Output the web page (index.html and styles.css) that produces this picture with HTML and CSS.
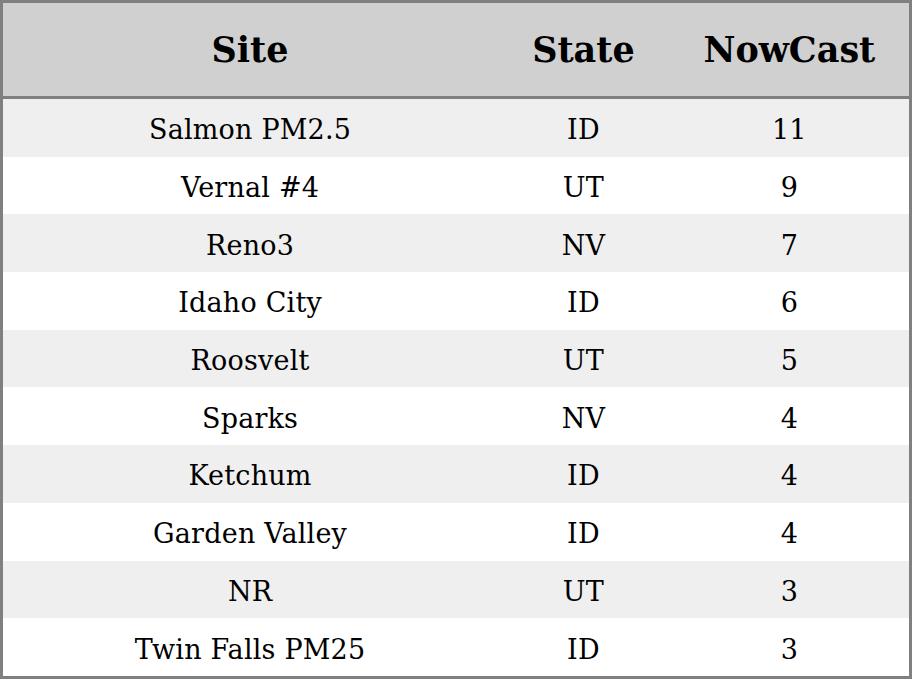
FILE: index.html
```html
<!DOCTYPE html>
<html>
<head>
<meta charset="utf-8">
<link rel="stylesheet" href="styles.css">
</head>
<body>
<table class="aq">
  <colgroup>
    <col class="c-site">
    <col class="c-state">
    <col class="c-now">
  </colgroup>
  <thead>
    <tr><th>Site</th><th>State</th><th>NowCast</th></tr>
  </thead>
  <tbody>
    <tr><td>Salmon PM2.5</td><td>ID</td><td>11</td></tr>
    <tr><td>Vernal #4</td><td>UT</td><td>9</td></tr>
    <tr><td>Reno3</td><td>NV</td><td>7</td></tr>
    <tr><td>Idaho City</td><td>ID</td><td>6</td></tr>
    <tr><td>Roosvelt</td><td>UT</td><td>5</td></tr>
    <tr><td>Sparks</td><td>NV</td><td>4</td></tr>
    <tr><td>Ketchum</td><td>ID</td><td>4</td></tr>
    <tr><td>Garden Valley</td><td>ID</td><td>4</td></tr>
    <tr><td>NR</td><td>UT</td><td>3</td></tr>
    <tr><td>Twin Falls PM25</td><td>ID</td><td>3</td></tr>
  </tbody>
</table>
</body>
</html>
```
FILE: styles.css
```css
html, body {
  margin: 0;
  padding: 0;
  background: #ffffff;
}
.aq {
  width: 912px;
  height: 679px;
  border-collapse: collapse;
  border: 3px solid #808080;
  font-family: "DejaVu Serif", serif;
  color: #000;
  table-layout: fixed;
}
.c-site { width: 494px; }
.c-state { width: 172px; }
.c-now { width: 240px; }
.aq th {
  background: #d0d0d0;
  font-size: 35px;
  font-weight: bold;
  height: 93px;
  padding: 0;
  border-bottom: 3px solid #808080;
  text-align: center;
}
.aq td {
  font-size: 27px;
  letter-spacing: 0.2px;
  height: 53.7px;
  padding: 4px 0 0 0;
  text-align: center;
}
.aq tbody tr:nth-child(odd) td { background: #efefef; }
.aq tbody tr:nth-child(even) td { background: #ffffff; }
```
